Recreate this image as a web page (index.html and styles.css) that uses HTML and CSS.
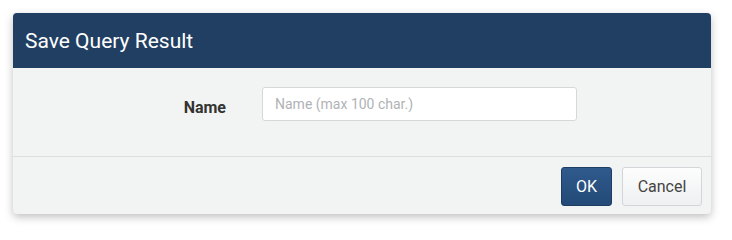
FILE: index.html
```html
<!DOCTYPE html>
<html>
<head>
<meta charset="utf-8">
<link rel="stylesheet" href="styles.css">
</head>
<body>
<div class="dialog">
  <div class="dialog-header">Save Query Result</div>
  <div class="dialog-body">
    <label class="field-label" for="name">Name</label>
    <input id="name" class="field-input" type="text" placeholder="Name (max 100 char.)">
  </div>
  <div class="dialog-footer">
    <button class="btn btn-primary">OK</button>
    <button class="btn btn-default">Cancel</button>
  </div>
</div>
</body>
</html>
```

FILE: styles.css
```css
html, body {
  margin: 0;
  padding: 0;
  background: #ffffff;
}
body {
  padding: 13px 21px 22px 13px;
  font-family: Roboto, "Liberation Sans", sans-serif;
}
.dialog {
  width: 698px;
  height: 201px;
  box-sizing: border-box;
  background: #f2f3f3;
  border-radius: 4px;
  box-shadow: 0 3px 9px rgba(0,0,0,0.25);
  overflow: hidden;
  display: flex;
  flex-direction: column;
}
.dialog-header {
  height: 55px;
  box-sizing: border-box;
  background: #213f63;
  color: #ffffff;
  font-size: 21px;
  padding: 0 12px;
  display: flex;
  align-items: center;
}
.dialog-body {
  height: 89px;
  box-sizing: border-box;
  border-bottom: 1px solid #dcdedf;
  display: flex;
  align-items: flex-start;
  padding: 19px 0 0 0;
}
.field-label {
  width: 213px;
  text-align: right;
  font-weight: bold;
  font-size: 16px;
  color: #333333;
  line-height: 34px;
  padding-top: 4px;
  margin-right: 36px;
}
.field-input {
  width: 315px;
  height: 34px;
  box-sizing: border-box;
  border: 1px solid #d5d7d8;
  border-radius: 3px;
  background: #ffffff;
  padding: 0 12px;
  font-family: Roboto, "Liberation Sans", sans-serif;
  font-size: 14px;
  margin: 0;
}
.field-input::placeholder {
  color: #b0b3b5;
}
.dialog-footer {
  flex: 1;
  display: flex;
  justify-content: flex-end;
  align-items: flex-start;
  padding: 10px 9px 0 0;
  gap: 10px;
}
.btn {
  height: 39px;
  box-sizing: border-box;
  border-radius: 3px;
  font-family: Roboto, "Liberation Sans", sans-serif;
  font-size: 16px;
  padding: 0;
  margin: 0;
}
.btn-primary {
  width: 51px;
  background: linear-gradient(#2f5a8c, #234a78);
  border: 1px solid #1d3d63;
  color: #ffffff;
}
.btn-default {
  width: 80px;
  background: linear-gradient(#fdfdfd, #eef0f1);
  border: 1px solid #d3d6d8;
  color: #444444;
}
```
